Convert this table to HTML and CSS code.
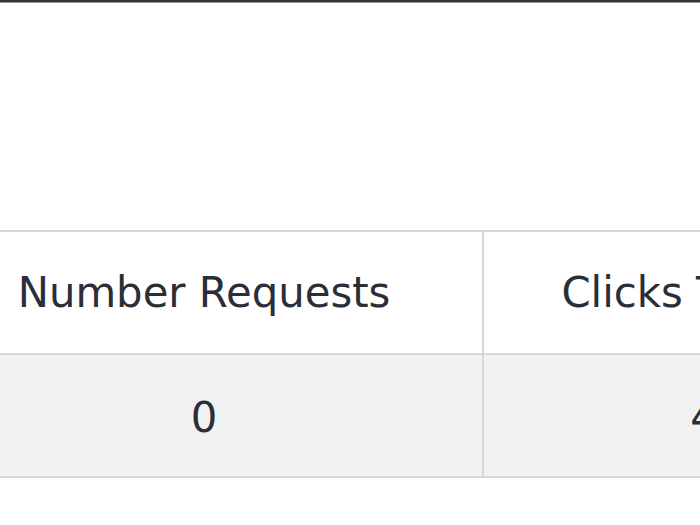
FILE: index.html
```html
<!DOCTYPE html>
<html lang="en">
<head>
<meta charset="utf-8">
<title>Report</title>
<link rel="stylesheet" href="styles.css">
</head>
<body>
<div class="topbar"></div>
<main class="content">
  <div class="stats-table" role="table">
    <div class="cell head" role="columnheader">Number Requests</div>
    <div class="cell head" role="columnheader">Clicks Through Rate</div>
    <div class="cell data" role="cell">0</div>
    <div class="cell data" role="cell">46.15%</div>
  </div>
</main>
</body>
</html>
```
FILE: styles.css
```css
html, body {
  margin: 0;
  padding: 0;
  background: #ffffff;
  overflow: hidden;
}

body {
  font-family: "DejaVu Sans", "Liberation Sans", sans-serif;
  color: #2b2e36;
}

.topbar {
  height: 2px;
  background: #353535;
  border-bottom: 1px solid #9a9a9a;
}

.content {
  padding-top: 227px;
}

.stats-table {
  display: grid;
  grid-template-columns: 558px 572px;
  margin-left: -74px;
  width: 1130px;
  border-top: 2px solid #d6d7d8;
}

.cell {
  box-sizing: border-box;
  height: 123px;
  display: flex;
  align-items: center;
  justify-content: center;
  border-bottom: 2px solid #d6d7d8;
  font-size: 41.8px;
  white-space: nowrap;
}

.cell:nth-child(odd) {
  border-right: 2px solid #d6d7d8;
}

.head {
  background: #ffffff;
}

.data {
  background: #f1f2f3;
  padding-top: 4px;
}
```
